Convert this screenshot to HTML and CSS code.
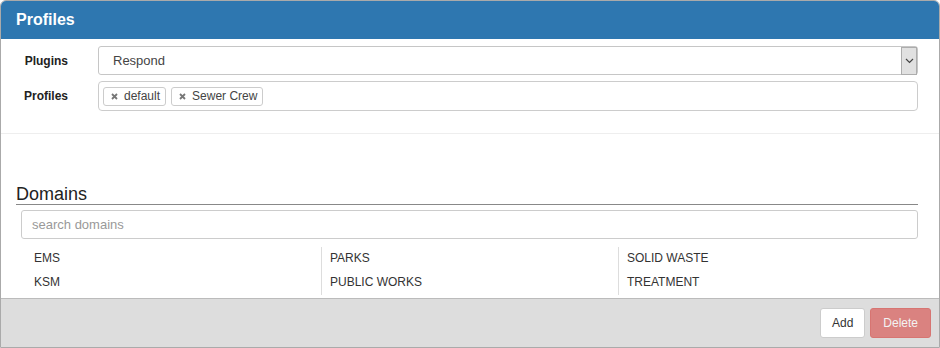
FILE: index.html
```html
<!DOCTYPE html>
<html lang="en">
<head>
<meta charset="UTF-8">
<title>Profiles</title>
<link rel="stylesheet" href="styles.css">
</head>
<body>
<div class="panel">
    <div class="panel-heading">Profiles</div>
    <div class="panel-body">
        <div class="form">
            <div class="form-row">
                <label>Plugins</label>
                <div class="select">
                    <span class="select-value">Respond</span>
                    <span class="select-arrow">
                        <svg width="9" height="6" viewBox="0 0 9 6"><path d="M1 1l3.5 3.5L8 1" fill="none" stroke="#444" stroke-width="1.2"/></svg>
                    </span>
                </div>
            </div>
            <div class="form-row">
                <label>Profiles</label>
                <div class="tags">
                    <span class="tag"><svg width="7" height="7" viewBox="0 0 7 7"><path d="M1 1l5 5M6 1l-5 5" stroke="#777" stroke-width="1.8"/></svg>default</span>
                    <span class="tag"><svg width="7" height="7" viewBox="0 0 7 7"><path d="M1 1l5 5M6 1l-5 5" stroke="#777" stroke-width="1.8"/></svg>Sewer Crew</span>
                </div>
            </div>
        </div>

        <div class="domains">
            <h3>Domains</h3>
            <input class="search" type="text" placeholder="search domains">
            <div class="domain-list">
                <div class="domain-col">
                    <div class="domain">EMS</div>
                    <div class="domain">KSM</div>
                </div>
                <div class="domain-col">
                    <div class="domain">PARKS</div>
                    <div class="domain">PUBLIC WORKS</div>
                </div>
                <div class="domain-col">
                    <div class="domain">SOLID WASTE</div>
                    <div class="domain">TREATMENT</div>
                </div>
            </div>
        </div>
    </div>
    <div class="panel-footer">
        <button class="btn">Add</button>
        <button class="btn btn-danger" disabled>Delete</button>
    </div>
</div>
</body>
</html>
```

FILE: styles.css
```css
* {
  box-sizing: border-box;
}

body {
  margin: 0;
  font-family: "Liberation Sans", Arial, sans-serif;
  color: #333;
  background-color: #fff;
}

.panel {
  width: 940px;
  height: 348px;
  border: 1px solid #aaa;
  border-radius: 6px 6px 0 0;
  display: flex;
  flex-direction: column;
  overflow: hidden;
}

.panel-heading {
  height: 38px;
  background-color: #2e77b0;
  color: #fff;
  font-size: 16px;
  font-weight: bold;
  padding: 10px 0 0 15px;
}

.panel-body {
  flex: 1;
}

.form {
  padding: 7px 21px 22px 0;
  border-bottom: 1px solid #eee;
}

.form-row {
  display: flex;
  align-items: center;
  margin-bottom: 6px;
}

.form-row:last-child {
  margin-bottom: 0;
}

.form-row label {
  width: 67px;
  text-align: right;
  font-size: 12px;
  font-weight: bold;
  color: #222;
  margin-right: 30px;
}

.select {
  flex: 1;
  height: 29px;
  border: 1px solid #c6c6c6;
  border-radius: 3px;
  display: flex;
  align-items: center;
  justify-content: space-between;
  padding: 1px 0 1px 14px;
  font-size: 13px;
  color: #444;
}

.select-arrow {
  width: 16px;
  height: 28px;
  margin: -1px 0;
  background-color: #e1e1e1;
  border: 1px solid #adadad;
  display: flex;
  align-items: center;
  justify-content: center;
}

.tags {
  flex: 1;
  height: 30px;
  border: 1px solid #ccc;
  border-radius: 4px;
  display: flex;
  align-items: center;
  gap: 5px;
  padding-left: 4px;
}

.tag {
  height: 19px;
  border: 1px solid #ccc;
  border-radius: 3px;
  font-size: 12px;
  color: #444;
  display: flex;
  align-items: center;
  gap: 6px;
  padding: 0 5px 0 7px;
}

.domains {
  padding: 0 21px 0 15px;
}

.domains h3 {
  margin: 50px 0 0;
  font-size: 18px;
  font-weight: normal;
  line-height: 20px;
  color: #222;
  border-bottom: 1px solid #888;
}

.search {
  display: block;
  width: calc(100% - 5px);
  margin: 5px 0 0 5px;
  height: 29px;
  border: 1px solid #ccc;
  border-radius: 3px;
  padding: 0 10px;
  font-family: inherit;
  font-size: 13px;
}

.search::placeholder {
  color: #999;
}

.domain-list {
  display: grid;
  grid-template-columns: 297px 297px 1fr;
  margin: 8px 0 0 8px;
}

.domain-col {
  padding-left: 8px;
}

.domain-col:first-child {
  padding-left: 10px;
}

.domain-col + .domain-col {
  border-left: 1px solid #ddd;
}

.domain {
  font-size: 12px;
  line-height: 20px;
  height: 24px;
  padding-top: 1px;
  color: #333;
}

.panel-footer {
  height: 49px;
  background-color: #ddd;
  border-top: 1px solid #bbb;
  display: flex;
  justify-content: flex-end;
  align-items: center;
  gap: 5px;
  padding-right: 8px;
}

.btn {
  height: 30px;
  padding: 0 11px;
  font-family: inherit;
  font-size: 12px;
  color: #333;
  background-color: #fff;
  border: 1px solid #ccc;
  border-radius: 3px;
}

.btn-danger {
  color: #fff;
  background-color: #d9534f;
  border-color: #d43f3a;
  opacity: 0.65;
  padding: 0 12px;
}
```
